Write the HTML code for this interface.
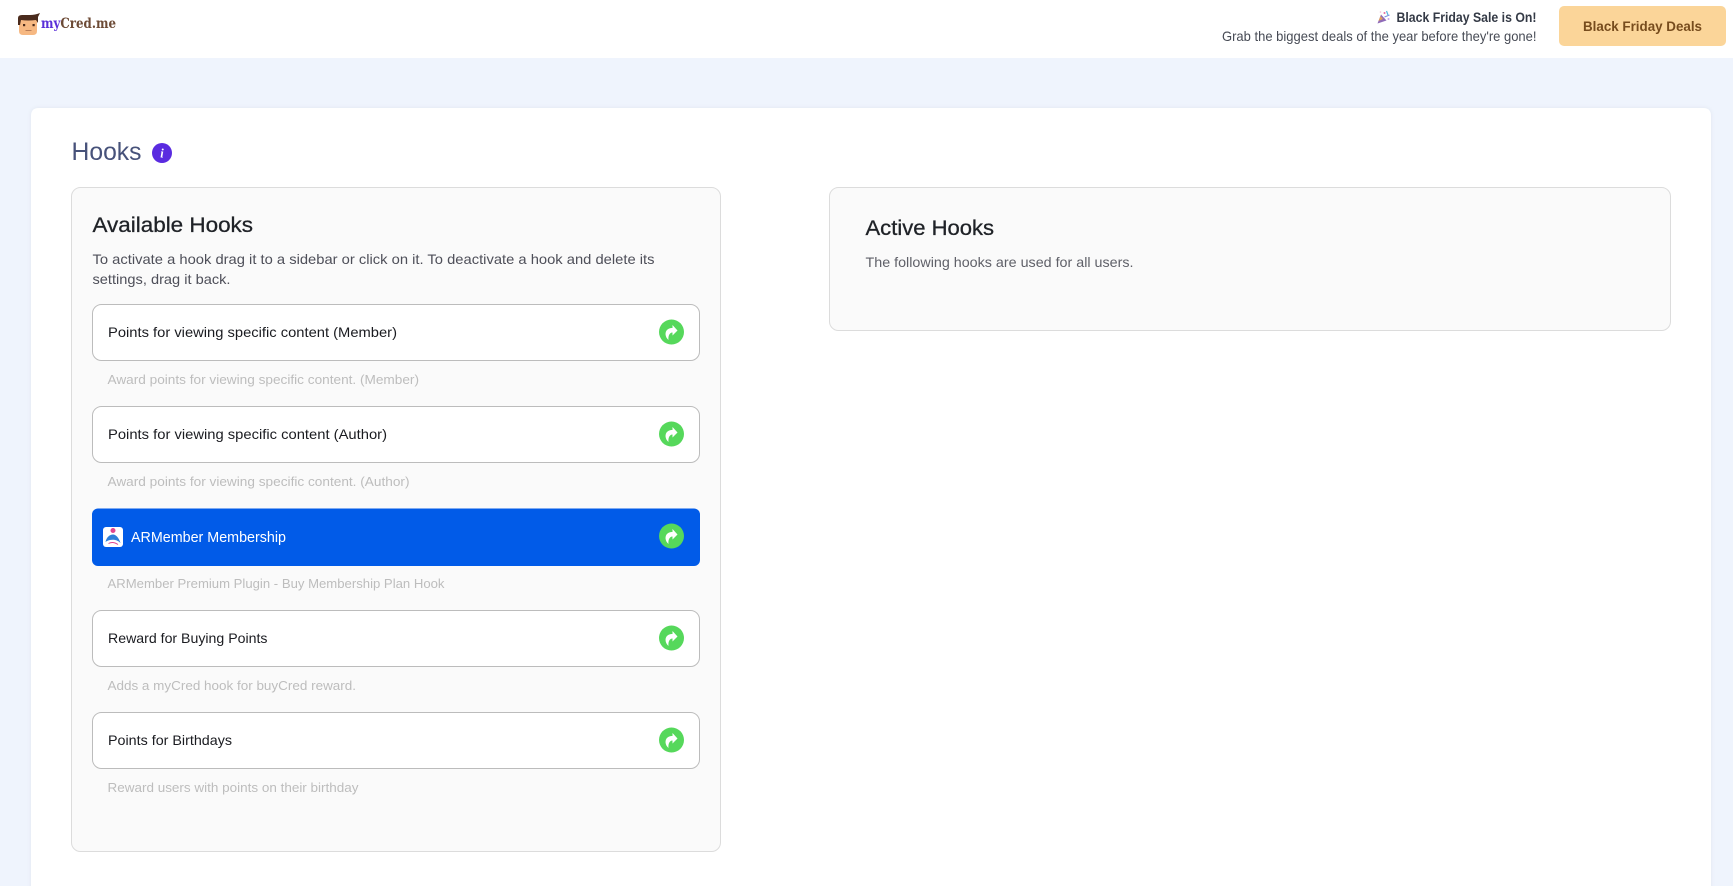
<!DOCTYPE html>
<html lang="en">
<head>
<meta charset="utf-8">
<title>Hooks</title>
<style>
html,body{margin:0;padding:0;width:1733px;height:886px;overflow:hidden;background:#eff4fd}
svg{display:block}
text{font-family:"Liberation Sans",sans-serif;white-space:pre}
.t{font-size:21px;fill:#1f2227;stroke:#1f2227;stroke-width:.3}
.d{font-size:14px;fill:#4e4f59}
.i{font-size:14px;fill:#1a1b20}
.s{font-size:13px;fill:#bdbdbd}
</style>
</head>
<body>
<svg width="1733" height="886" viewBox="0 0 1733 886" xmlns="http://www.w3.org/2000/svg">
<defs>
<filter id="sh" x="-2%" y="-2%" width="104%" height="104%"><feDropShadow dx="0" dy="0" stdDeviation="2" flood-color="#000" flood-opacity=".06"/></filter>
<g id="go">
<circle r="12.5" fill="#56d85b"/>
<path d="M-3 8C-6.500 5-7 0-4-2.500-2.500-3.800-.5-4 1-4V-7L6-1.500 1 3.500V.5C-2 .5-3.500 4-3 8Z" fill="#fff"/>
</g>
</defs>

<rect width="1733" height="886" fill="#eff4fd"/>
<rect width="1733" height="58" fill="#fff"/>

<!-- logo -->
<path d="M19 20H37V31Q37 35 33 35H23Q19 35 19 31Z" fill="#f6b882"/>
<path d="M18 25V18Q18 15 22 15H30Q35 15 40 13L38 17V23L36 20Q28 21 21 20L20 25Z" fill="#4a2b1d"/>
<rect x="23" y="24" width="2.200" height="2.200" fill="#4a2b1d"/>
<rect x="32.500" y="24" width="2.200" height="2.200" fill="#4a2b1d"/>
<rect x="25.500" y="30" width="6" height="1" fill="#b97e58"/>
<text x="41" y="28" font-size="13.500" font-weight="700" textLength="75" lengthAdjust="spacingAndGlyphs" style="font-family:'DejaVu Serif',serif"><tspan fill="#5a2fd8">my</tspan><tspan fill="#6c4a35">Cred.me</tspan></text>

<!-- promo -->
<g transform="translate(3.500 0)">
<path d="M1374 23.500L1377.500 14.500 1383 20.500Z" fill="#8f6bb8"/>
<path d="M1375 21L1377 16 1379.500 19Z" fill="#e0a05c"/>
<circle cx="1381" cy="13" r="1" fill="#e46aa0"/>
<path d="M1383 11L1384.500 15" stroke="#55b6e0" stroke-width="1.200"/>
<path d="M1381 17L1386 15" stroke="#7c8fe0" stroke-width="1"/>
<circle cx="1385" cy="19" r="1" fill="#c8a6e8"/>
<circle cx="1377" cy="12" r=".8" fill="#f0c0d8"/>
</g>
<text x="1396.500" y="22" font-size="14" font-weight="700" fill="#343a46" textLength="140" lengthAdjust="spacingAndGlyphs">Black Friday Sale is On!</text>
<text x="1222" y="41" font-size="14" fill="#474b55" textLength="314.500" lengthAdjust="spacingAndGlyphs">Grab the biggest deals of the year before they're gone!</text>
<rect x="1559" y="6" width="167" height="40" rx="5" fill="#fbd599"/>
<text x="1583" y="31" font-size="14" font-weight="700" fill="#774c1d" textLength="119" lengthAdjust="spacingAndGlyphs">Black Friday Deals</text>

<!-- main card -->
<path d="M31 895V116Q31 108 39 108H1703Q1711 108 1711 116V895Z" fill="#fff" filter="url(#sh)"/>

<text x="71.500" y="160" font-size="25" fill="#47527a" textLength="70" lengthAdjust="spacingAndGlyphs">Hooks</text>
<circle cx="162" cy="153" r="10" fill="#5a2be0"/>
<text x="162" y="157.500" font-size="12.500" font-style="italic" font-weight="700" fill="#fff" text-anchor="middle" style="font-family:'Liberation Serif',serif">i</text>

<!-- left panel -->
<rect x="71.500" y="187.500" width="649" height="664" rx="9" fill="#fafafa" stroke="#dcdcdc"/>
<text class="t" x="92.500" y="232" textLength="160.500" lengthAdjust="spacingAndGlyphs">Available Hooks</text>
<text class="d" x="92.500" y="264" textLength="562" lengthAdjust="spacingAndGlyphs">To activate a hook drag it to a sidebar or click on it. To deactivate a hook and delete its</text>
<text class="d" x="92.500" y="284" textLength="138" lengthAdjust="spacingAndGlyphs">settings, drag it back.</text>

<!-- item 1 -->
<rect x="92.500" y="304.500" width="607" height="56" rx="9" fill="#fff" stroke="#bcbcbc"/>
<text class="i" x="108" y="337" textLength="289" lengthAdjust="spacingAndGlyphs">Points for viewing specific content (Member)</text>
<use href="#go" x="671.500" y="332"/>
<text class="s" x="107.500" y="384" textLength="311.500" lengthAdjust="spacingAndGlyphs">Award points for viewing specific content. (Member)</text>

<!-- item 2 -->
<rect x="92.500" y="406.500" width="607" height="56" rx="9" fill="#fff" stroke="#bcbcbc"/>
<text class="i" x="108" y="439" textLength="279" lengthAdjust="spacingAndGlyphs">Points for viewing specific content (Author)</text>
<use href="#go" x="671.500" y="434"/>
<text class="s" x="107.500" y="486" textLength="302" lengthAdjust="spacingAndGlyphs">Award points for viewing specific content. (Author)</text>

<!-- item 3 -->
<rect x="92" y="508.500" width="608" height="57.500" rx="6" fill="#015be8"/>
<rect x="103" y="527" width="20" height="20" rx="3" fill="#fff"/>
<circle cx="113" cy="530.500" r="2.500" fill="#e0468f"/>
<path d="M105.500 542C106.500 537 110 534.500 113 534.500 116 534.500 119 538 120.500 543 117 539.500 113 539.500 110 540 108 540.500 106.500 541 105.500 542Z" fill="#2f7fd8"/>
<path d="M108.500 543.500Q113 541 118 544.500" stroke="#e0468f" stroke-width="1" fill="none"/>
<text x="131" y="542" font-size="14.500" fill="#fff" textLength="155" lengthAdjust="spacingAndGlyphs">ARMember Membership</text>
<use href="#go" x="671.500" y="536"/>
<text class="s" x="107.500" y="588" textLength="337" lengthAdjust="spacingAndGlyphs">ARMember Premium Plugin - Buy Membership Plan Hook</text>

<!-- item 4 -->
<rect x="92.500" y="610.500" width="607" height="56" rx="9" fill="#fff" stroke="#bcbcbc"/>
<text class="i" x="108" y="643" textLength="159.500" lengthAdjust="spacingAndGlyphs">Reward for Buying Points</text>
<use href="#go" x="671.500" y="638"/>
<text class="s" x="107.500" y="690" textLength="248.500" lengthAdjust="spacingAndGlyphs">Adds a myCred hook for buyCred reward.</text>

<!-- item 5 -->
<rect x="92.500" y="712.500" width="607" height="56" rx="9" fill="#fff" stroke="#bcbcbc"/>
<text class="i" x="108" y="745" textLength="124" lengthAdjust="spacingAndGlyphs">Points for Birthdays</text>
<use href="#go" x="671.500" y="740"/>
<text class="s" x="107.500" y="792" textLength="251" lengthAdjust="spacingAndGlyphs">Reward users with points on their birthday</text>

<!-- right panel -->
<rect x="829.500" y="187.500" width="841" height="143" rx="9" fill="#fafafa" stroke="#dcdcdc"/>
<text class="t" x="865.500" y="235" textLength="128.500" lengthAdjust="spacingAndGlyphs">Active Hooks</text>
<text x="865.500" y="267" font-size="14" fill="#5f6068" textLength="268" lengthAdjust="spacingAndGlyphs">The following hooks are used for all users.</text>
</svg>
</body>
</html>
